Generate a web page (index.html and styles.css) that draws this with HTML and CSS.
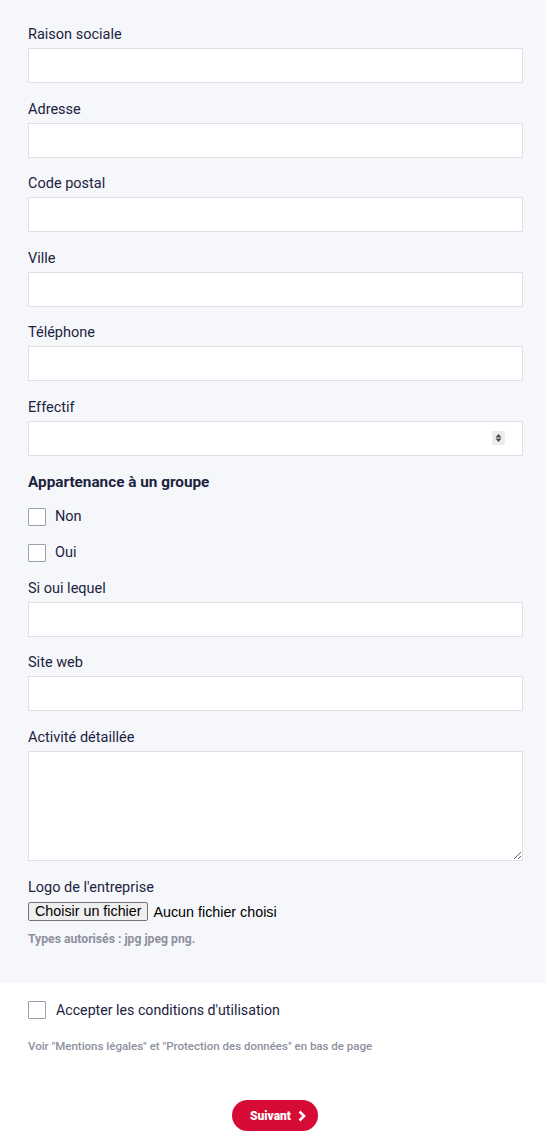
FILE: index.html
```html
<!DOCTYPE html>
<html lang="fr">
<head>
<meta charset="utf-8">
<title>Entreprise</title>
<link rel="stylesheet" href="styles.css">
</head>
<body>
<form class="form">
  <section class="panel">
    <div class="field">
      <label class="label" for="raison">Raison sociale</label>
      <input class="input" id="raison" type="text">
    </div>
    <div class="field">
      <label class="label" for="adresse">Adresse</label>
      <input class="input" id="adresse" type="text">
    </div>
    <div class="field">
      <label class="label" for="cp">Code postal</label>
      <input class="input" id="cp" type="text">
    </div>
    <div class="field">
      <label class="label" for="ville">Ville</label>
      <input class="input" id="ville" type="text">
    </div>
    <div class="field">
      <label class="label" for="tel">Téléphone</label>
      <input class="input" id="tel" type="text">
    </div>
    <div class="field">
      <label class="label" for="effectif">Effectif</label>
      <div class="select-wrap">
        <select class="input select" id="effectif"><option></option></select>
        <span class="select-arrows">
          <svg width="13" height="14" viewBox="0 0 13 14">
            <path d="M6.5 3 L9.5 6.5 H3.5 Z" fill="#4a4a4a"/>
            <path d="M6.5 11 L9.5 7.5 H3.5 Z" fill="#4a4a4a"/>
          </svg>
        </span>
      </div>
    </div>

    <fieldset class="group">
      <legend class="group-title">Appartenance à un groupe</legend>
      <label class="check"><input class="box" type="checkbox"><span>Non</span></label>
      <label class="check"><input class="box" type="checkbox"><span>Oui</span></label>
    </fieldset>

    <div class="field">
      <label class="label" for="lequel">Si oui lequel</label>
      <input class="input" id="lequel" type="text">
    </div>
    <div class="field">
      <label class="label" for="web">Site web</label>
      <input class="input" id="web" type="text">
    </div>
    <div class="field">
      <label class="label" for="activite">Activité détaillée</label>
      <textarea class="input textarea" id="activite"></textarea>
    </div>
    <div class="field field-file">
      <span class="label">Logo de l'entreprise</span>
      <div class="file">
        <button class="file-btn" type="button">Choisir un fichier</button>
        <span class="file-name">Aucun fichier choisi</span>
      </div>
      <p class="hint">Types autorisés : jpg jpeg png.</p>
    </div>
  </section>

  <section class="terms">
    <label class="check check-terms"><input class="box" type="checkbox"><span>Accepter les conditions d'utilisation</span></label>
    <p class="hint hint-terms">Voir "Mentions légales" et "Protection des données" en bas de page</p>
    <div class="actions">
      <button class="next" type="button">Suivant
        <svg width="10" height="12" viewBox="0 0 10 12"><path d="M2.5 1.5 L7 6 L2.5 10.5" fill="none" stroke="#fff" stroke-width="2.6"/></svg>
      </button>
    </div>
  </section>
</form>
</body>
</html>
```

FILE: styles.css
```css
* { box-sizing: border-box; }

html, body {
  margin: 0;
  padding: 0;
  background: #fff;
}

body {
  font-family: Roboto, "Liberation Sans", Arial, sans-serif;
  color: #1c2340;
}

.form { display: block; }

.panel {
  background: #f6f7fb;
  padding: 24px 23px 36px 28px;
}

.field {
  display: flex;
  flex-direction: column;
  margin-bottom: 15.6px;
}

.label {
  font-size: 14.5px;
  line-height: 20px;
  height: 21px;
  padding-top: 1px;
  margin-bottom: 3px;
  color: #1c2340;
}

.input {
  display: block;
  width: 100%;
  height: 35px;
  margin: 0;
  border: 1px solid #dedfe7;
  border-radius: 0;
  background: #fff;
  font: inherit;
  outline: none;
}

.select-wrap { position: relative; }

.select {
  appearance: none;
  -webkit-appearance: none;
}

.select-arrows {
  position: absolute;
  right: 18px;
  top: 10px;
  width: 13px;
  height: 14px;
  background: #ededf0;
  display: flex;
  pointer-events: none;
}

.textarea {
  height: 110px;
  resize: vertical;
}

.group {
  border: 0;
  margin: 0;
  padding: 0;
  display: flex;
  flex-direction: column;
  gap: 18px;
  margin-top: 1px;
  margin-bottom: 16px;
}

.group-title {
  padding: 0;
  font-size: 15.3px;
  font-weight: 700;
  line-height: 20px;
  margin-bottom: 16px;
  color: #1c2340;
}

.check {
  display: flex;
  align-items: center;
  gap: 9px;
  font-size: 14.5px;
  line-height: 18px;
  color: #1c2340;
}

.box {
  appearance: none;
  -webkit-appearance: none;
  width: 18px;
  height: 18px;
  margin: 0;
  border: 1px solid #9aa0ad;
  border-radius: 1px;
  background: #fff;
  flex: none;
}

.field-file { margin-bottom: 0; }
.field-file .label { margin-bottom: 4px; padding-top: 2px; height: 22px; }

.file {
  display: flex;
  align-items: center;
  gap: 5px;
  height: 19px;
}

.file-btn {
  height: 19px;
  padding: 0 6px;
  border: 1px solid #767676;
  border-radius: 2px;
  background: #efefef;
  color: #000;
  font-family: "Liberation Sans", Arial, sans-serif;
  font-size: 14.3px;
  line-height: 17px;
}

.file-name {
  font-family: "Liberation Sans", Arial, sans-serif;
  font-size: 14.3px;
  color: #000;
}

.hint {
  margin: 0;
  font-size: 12.2px;
  font-weight: 700;
  line-height: 16px;
  color: #8d919e;
}

.field-file .hint { margin-top: 10px; }

.terms {
  padding: 18px 28px 14px 28px;
}

.check-terms { gap: 10px; font-size: 14.2px; }

.hint-terms {
  margin-top: 19px;
  font-size: 11.5px;
  font-weight: 500;
}

.actions {
  display: flex;
  justify-content: center;
  margin-top: 46px;
}

.next {
  display: flex;
  align-items: center;
  gap: 6px;
  height: 31px;
  padding: 0 11px 0 18px;
  border: 0;
  border-radius: 16px;
  background: #d60c36;
  color: #fff;
  font-family: Roboto, "Liberation Sans", Arial, sans-serif;
  font-size: 12px;
  font-weight: 900;
  margin-left: 4px;
}
```
